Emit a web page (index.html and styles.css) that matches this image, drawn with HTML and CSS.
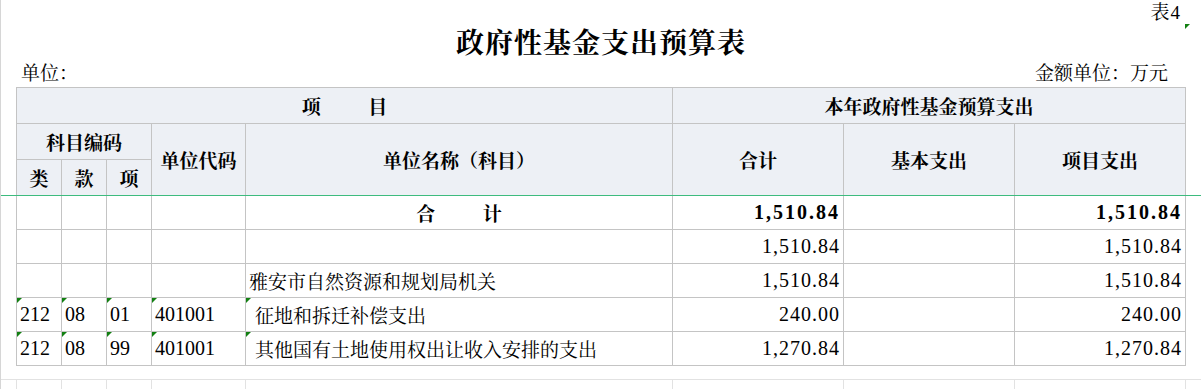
FILE: index.html
```html
<!DOCTYPE html>
<html lang="zh-CN">
<head>
<meta charset="utf-8">
<title>政府性基金支出预算表</title>
<link rel="stylesheet" href="styles.css">
</head>
<body>
<div class="page">
  <div class="topbar"><span class="tabno">表4</span><span class="flag flag-top"></span></div>
  <h1 class="title">政府性基金支出预算表</h1>
  <div class="unitrow">
    <span class="unit-left">单位：</span>
    <span class="unit-right">金额单位：万元</span>
  </div>
  <table class="sheet">
    <colgroup>
      <col class="c-code"><col class="c-code"><col class="c-code"><col class="c-unit"><col class="c-name"><col class="c-num"><col class="c-num"><col class="c-num">
    </colgroup>
    <thead>
      <tr class="hrow">
        <th colspan="5">项&emsp;&emsp;&ensp;目</th>
        <th colspan="3">本年政府性基金预算支出</th>
      </tr>
      <tr class="hrow">
        <th colspan="3">科目编码</th>
        <th rowspan="2">单位代码</th>
        <th rowspan="2">单位名称（科目）</th>
        <th rowspan="2">合计</th>
        <th rowspan="2">基本支出</th>
        <th rowspan="2">项目支出</th>
      </tr>
      <tr class="hrow">
        <th>类</th>
        <th>款</th>
        <th>项</th>
      </tr>
    </thead>
    <tbody>
      <tr class="drow total">
        <td></td><td></td><td></td><td></td>
        <td class="center">合&emsp;&emsp;&ensp;计</td>
        <td class="num">1,510.84</td><td class="num"></td><td class="num">1,510.84</td>
      </tr>
      <tr class="drow">
        <td></td><td></td><td></td><td></td><td></td>
        <td class="num">1,510.84</td><td class="num"></td><td class="num">1,510.84</td>
      </tr>
      <tr class="drow">
        <td></td><td></td><td></td><td></td>
        <td class="name">雅安市自然资源和规划局机关</td>
        <td class="num">1,510.84</td><td class="num"></td><td class="num">1,510.84</td>
      </tr>
      <tr class="drow">
        <td class="code mark">212</td><td class="code mark">08</td><td class="code mark">01</td><td class="code mark">401001</td>
        <td class="name indent mark">征地和拆迁补偿支出</td>
        <td class="num">240.00</td><td class="num"></td><td class="num">240.00</td>
      </tr>
      <tr class="drow">
        <td class="code mark">212</td><td class="code mark">08</td><td class="code mark">99</td><td class="code mark">401001</td>
        <td class="name indent mark">其他国有土地使用权出让收入安排的支出</td>
        <td class="num">1,270.84</td><td class="num"></td><td class="num">1,270.84</td>
      </tr>
    </tbody>
  </table>
  <div class="ghost">
    <table class="ghost-grid">
      <colgroup>
        <col class="c-code"><col class="c-code"><col class="c-code"><col class="c-unit"><col class="c-name"><col class="c-num"><col class="c-num"><col class="c-num">
      </colgroup>
      <tr><td></td><td></td><td></td><td></td><td></td><td></td><td></td><td></td></tr>
    </table>
  </div>
  <div class="freeze"></div>
</div>
</body>
</html>
```
FILE: styles.css
```css
* { box-sizing: border-box; }
html, body { margin: 0; padding: 0; background: #fff; }
body {
  font-family: "Liberation Serif", "Noto Serif CJK SC", "Noto Sans CJK SC", serif;
  color: #000;
  overflow: hidden;
}
.page {
  position: relative;
  width: 1201px;
  height: 389px;
  border-left: 1px solid #d6d6d6;
  overflow: hidden;
}
.topbar {
  height: 24px;
  padding-right: 20px;
  text-align: right;
  font-size: 19px;
  line-height: 26px;
}
.tabno { letter-spacing: 1px; }
.flag {
  position: absolute;
  width: 5px;
  height: 5px;
  background: #128012;
  clip-path: polygon(0 0, 100% 0, 0 100%);
}
.flag-top { left: 1184px; top: 24px; }
.title {
  margin: 0;
  height: 40px;
  line-height: 40px;
  text-align: center;
  font-size: 28px;
  letter-spacing: 1px;
  font-weight: bold;
}
.unitrow {
  display: flex;
  justify-content: space-between;
  height: 23px;
  line-height: 20px;
  font-size: 19px;
  padding-left: 20px;
  padding-right: 33px;
}
.sheet, .ghost-grid {
  border-collapse: collapse;
  table-layout: fixed;
  width: 1170px;
  margin-left: 15px;
}
.c-code { width: 45px; }
.c-unit { width: 94px; }
.c-name { width: 427px; }
.c-num { width: 171px; }
.sheet th, .sheet td {
  border: 1px solid #c4c4c4;
  padding: 0;
  font-size: 19px;
  overflow: hidden;
  white-space: nowrap;
}
.sheet th {
  background: #edf0f5;
  font-weight: bold;
  text-align: center;
}
.hrow { height: 36px; }
.drow { height: 34px; }
.sheet td { position: relative; }
.center { text-align: center; font-weight: bold; }
.code { padding-left: 3px !important; font-size: 20px !important; }
.name { padding-left: 3px !important; }
.indent { padding-left: 9px !important; }
.num {
  text-align: right;
  padding-right: 3px !important;
  font-size: 20px !important;
  letter-spacing: 1px;
}
.total .num { font-weight: bold; letter-spacing: 2px; }
.mark::before {
  content: "";
  position: absolute;
  left: 0;
  top: 0;
  width: 5px;
  height: 5px;
  background: #128012;
  clip-path: polygon(0 0, 100% 0, 0 100%);
}
.ghost {
  margin-top: 13px;
  border-top: 1px solid #e2e2e2;
}
.ghost-grid td {
  height: 30px;
  border-left: 1px solid #e2e2e2;
  border-right: 1px solid #e2e2e2;
  padding: 0;
}
.freeze {
  position: absolute;
  left: -1px;
  top: 195px;
  width: 1202px;
  height: 1px;
  background: #3dbb7e;
}
```
